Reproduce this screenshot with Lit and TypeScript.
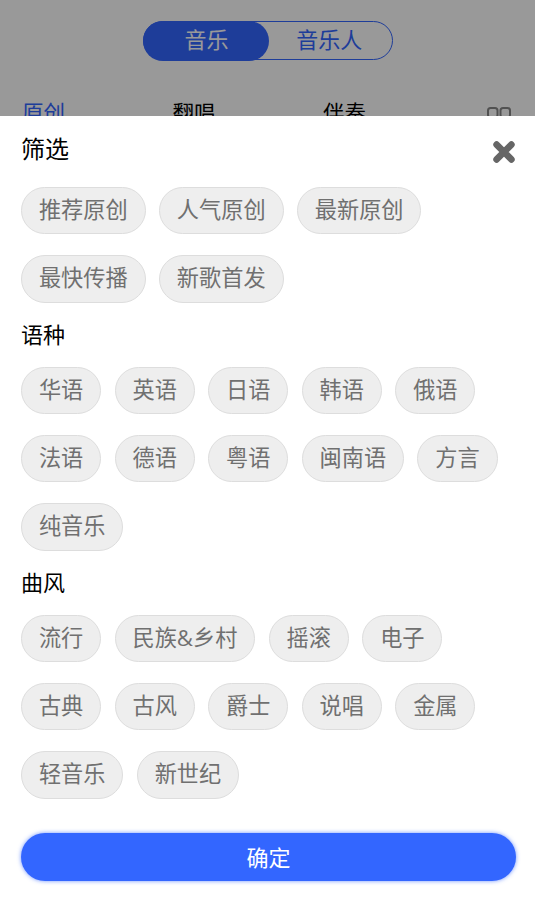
import { LitElement, html, css } from "lit";
import { customElement } from "lit/decorators.js";

const groups: { label: string; items: string[] }[] = [
  { label: "", items: ["推荐原创", "人气原创", "最新原创", "最快传播", "新歌首发"] },
  { label: "语种", items: ["华语", "英语", "日语", "韩语", "俄语", "法语", "德语", "粤语", "闽南语", "方言", "纯音乐"] },
  { label: "曲风", items: ["流行", "民族&乡村", "摇滚", "电子", "古典", "古风", "爵士", "说唱", "金属", "轻音乐", "新世纪"] },
];

@customElement("app-root")
export class AppRoot extends LitElement {
  static styles = css`
    :host {
      display: block;
      position: relative;
      width: 535px;
      height: 915px;
      overflow: hidden;
      background: #fff;
      font-family: "Noto Sans CJK SC", "Liberation Sans", sans-serif;
    }
    .page { padding-top: 21px; }
    .seg {
      display: flex;
      width: 250px;
      height: 39px;
      margin: 0 auto;
      box-sizing: border-box;
      border: 1.5px solid #3366ff;
      border-radius: 20px;
      font-size: 22px;
      line-height: 33px;
      text-align: center;
      color: #3366ff;
    }
    .seg .on {
      width: 126px;
      margin: -1.5px 0 -1.5px -0.5px;
      padding-left: 1px;
      box-sizing: border-box;
      line-height: 35px;
      background: #3366ff;
      color: #fff;
      border-radius: 20px;
    }
    .seg .off { flex: 1; padding-right: 2px; }
    .tabs {
      display: flex;
      align-items: flex-start;
      margin-top: 37px;
      padding: 0 24px 0 22px;
      font-size: 21.5px;
      line-height: 30px;
      color: #000;
    }
    .tabs span { width: 150.5px; }
    .tabs .cur { color: #3366ff; }
    .tabs svg { margin-left: auto; margin-top: 10px; }
    .mask {
      position: absolute;
      inset: 0;
      background: rgba(0, 0, 0, 0.4);
    }
    .sheet {
      position: absolute;
      left: 0;
      right: 0;
      top: 116px;
      bottom: 0;
      background: #fff;
      padding: 0 19px 0 21px;
      box-sizing: border-box;
    }
    .head {
      display: flex;
      justify-content: space-between;
      align-items: center;
      height: 71px;
      box-sizing: border-box;
      padding-bottom: 8px;
      font-size: 24px;
      color: #000;
    }
    .head svg { margin-top: 9px; }
    .label {
      font-size: 22px;
      line-height: 28px;
      color: #000;
      margin-bottom: 20px;
    }
    .chips {
      display: flex;
      flex-wrap: wrap;
      column-gap: 13.3px;
      row-gap: 20.9px;
      margin-bottom: 16px;
    }
    .chip {
      height: 47.4px;
      box-sizing: border-box;
      padding: 0 16.95px;
      border: 1px solid #dddddd;
      border-radius: 24px;
      background: #eeeeee;
      color: #707070;
      font-family: "Open Sans", "Noto Sans CJK SC", sans-serif;
      font-size: 22.2px;
      line-height: 44px;
      white-space: nowrap;
    }
    .ok {
      width: 495px;
      height: 48px;
      margin-top: 34.5px;
      border-radius: 24px;
      background: #3366ff;
      color: #fff;
      font-size: 22px;
      line-height: 46px;
      text-align: center;
      box-shadow: 0 0 4px rgba(51, 102, 255, 0.7);
    }
    .chips.last { margin-bottom: 0; }
  `;

  render() {
    return html`
      <div class="page">
        <div class="seg"><div class="on">音乐</div><div class="off">音乐人</div></div>
        <div class="tabs">
          <span class="cur">原创</span><span>翻唱</span><span>伴奏</span>
          <svg width="24" height="24" viewBox="0 0 24 24" fill="none" stroke="#888" stroke-width="2">
            <rect x="1" y="1" width="9.5" height="9.5" rx="2.5"></rect>
            <rect x="13.5" y="1" width="9.5" height="9.5" rx="2.5"></rect>
          </svg>
        </div>
      </div>
      <div class="mask"></div>
      <div class="sheet">
        <div class="head">
          <span>筛选</span>
          <svg width="24" height="24" viewBox="0 0 24 24" fill="none" stroke="#666" stroke-width="6.6" stroke-linecap="round">
            <path d="M4.6 4.6 L19.4 19.4 M19.4 4.6 L4.6 19.4"></path>
          </svg>
        </div>
        ${groups.map(
          (g, i) => html`
            ${g.label ? html`<div class="label">${g.label}</div>` : ""}
            <div class="chips ${i === groups.length - 1 ? "last" : ""}">
              ${g.items.map((t) => html`<div class="chip">${t}</div>`)}
            </div>
          `
        )}
        <div class="ok">确定</div>
      </div>
    `;
  }
}
